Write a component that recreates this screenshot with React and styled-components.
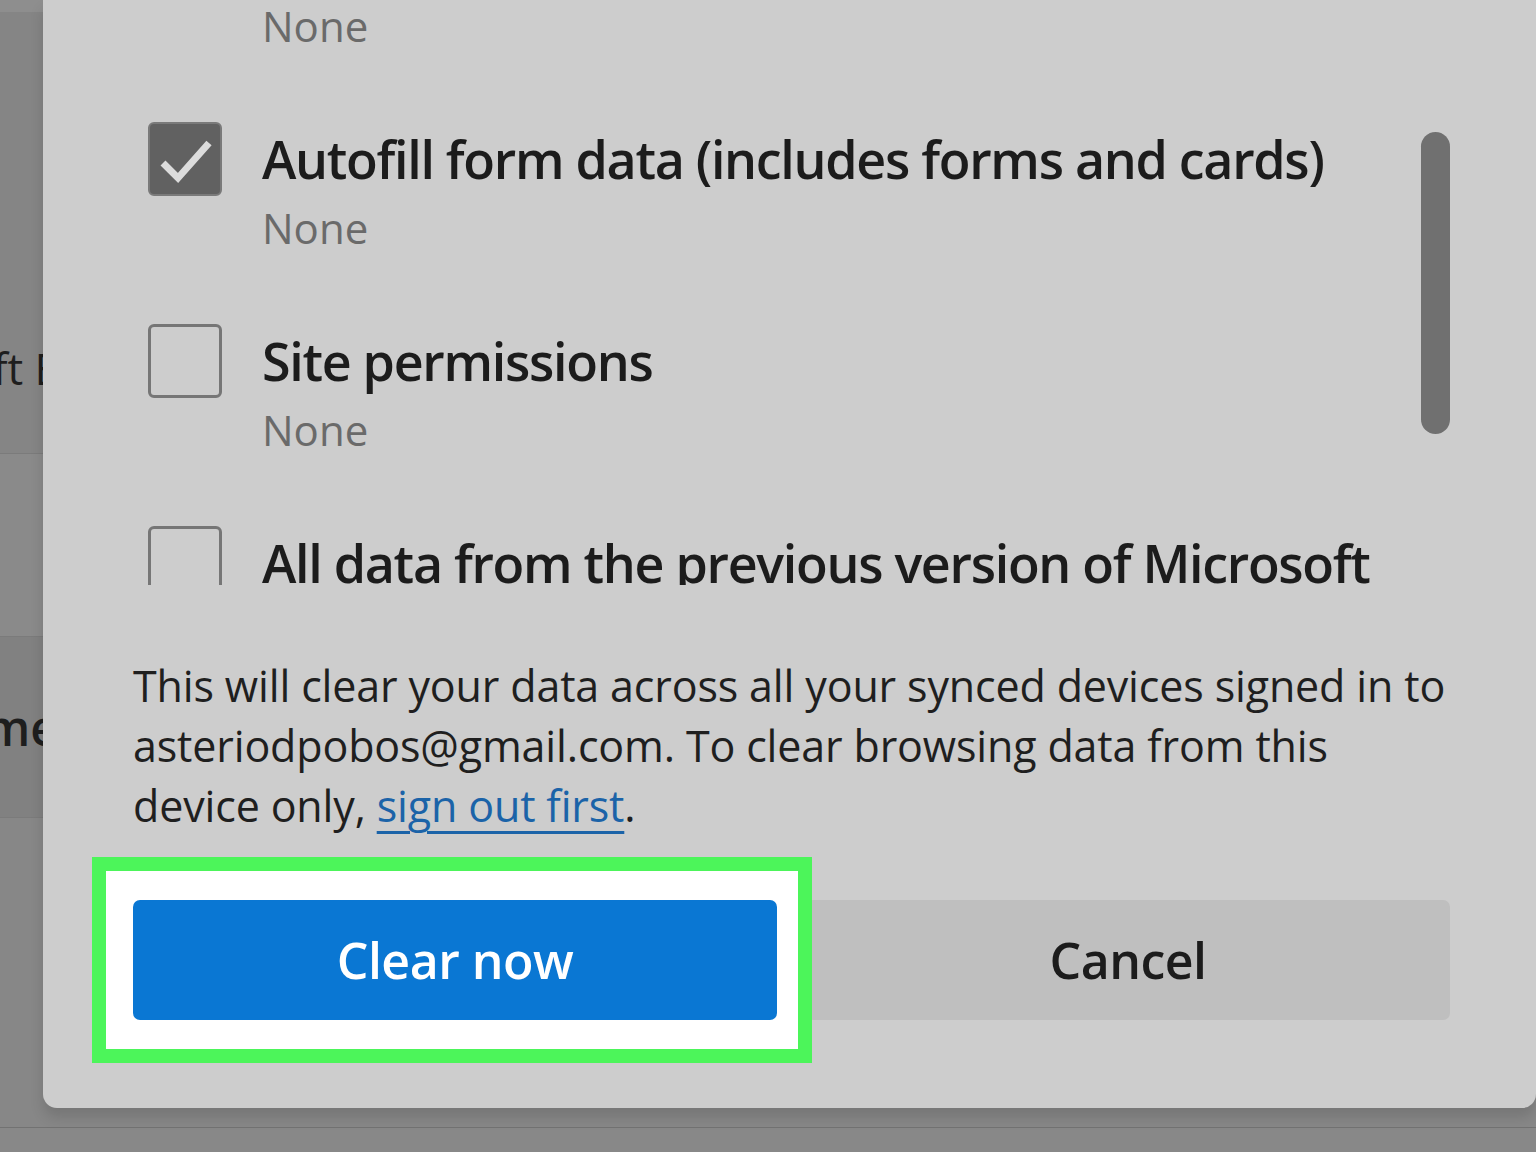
import React from "react";
import styled, { createGlobalStyle } from "styled-components";

const GlobalStyle = createGlobalStyle`
  html, body {
    margin: 0;
    padding: 0;
    background: #888888;
    overflow: hidden;
  }
  body {
    font-family: "Open Sans", "Noto Sans", "Liberation Sans", sans-serif;
  }
`;

const Page = styled.div`
  position: relative;
  width: 1536px;
  height: 1152px;
  overflow: hidden;
  background: #888888;
`;

// settings page behind the modal, only its right-hand edge is visible
const Backdrop = styled.div`
  display: flex;
  flex-direction: column;
  width: 100%;
  height: 100%;
`;

const BackdropStrip = styled.div`
  flex: 1;
  display: flex;
  flex-direction: column;
`;

const BackdropRow = styled.div`
  height: ${props => props.h}px;
  flex: ${props => (props.grow ? 1 : "none")};
  background: ${props => props.bg};
  display: flex;
  align-items: center;
  justify-content: flex-end;
  width: ${props => props.w || 60}px;
  overflow: hidden;
  border-bottom: ${props => (props.line ? "1px solid #7b7b7b" : "none")};
`;

const BackdropFooter = styled.div`
  height: 24px;
  background: #888888;
  border-top: 1px solid #727272;
`;

const BackdropText = styled.span`
  font-size: ${props => (props.bold ? 48 : 44)}px;
  font-weight: ${props => (props.bold ? 600 : 400)};
  color: #1e1e1e;
  white-space: nowrap;
`;

const Dialog = styled.div`
  position: absolute;
  left: 43px;
  right: 0;
  top: 0;
  height: 1108px;
  box-sizing: border-box;
  padding: 0 86px 88px 90px;
  background: #cdcdcd;
  border-radius: 0 0 14px 14px;
  box-shadow: 0 10px 14px rgba(0, 0, 0, 0.13);
  display: flex;
  flex-direction: column;
`;

const ScrollArea = styled.div`
  position: relative;
  height: 585px;
  overflow: hidden;
  flex: none;
`;

const List = styled.div`
  margin-top: -80px;
  padding: 0 30px 0 15px;
`;

const Item = styled.div`
  display: grid;
  grid-template-columns: 74px 1fr;
  column-gap: 40px;
  margin-bottom: 64px;
`;

const Box = styled.div`
  width: 74px;
  height: 74px;
  box-sizing: border-box;
  border-radius: 6px;
  border: ${props => (props.checked ? "2px solid #7a7a7a" : "3px solid #767676")};
  background: ${props => (props.checked ? "#616161" : "transparent")};
  display: flex;
  align-items: center;
  justify-content: center;
`;

const Title = styled.div`
  font-size: 52px;
  line-height: 74px;
  font-weight: 600;
  color: #1c1c1c;
  letter-spacing: -1.3px;
`;

const Detail = styled.div`
  grid-column: 2;
  font-size: 42px;
  line-height: 64px;
  color: #6a6a6a;
`;

const Thumb = styled.div`
  position: absolute;
  right: 0;
  top: 132px;
  width: 29px;
  height: 302px;
  border-radius: 15px;
  background: #707070;
`;

const Notice = styled.p`
  margin: 71px 0 0;
  font-size: 43px;
  line-height: 60px;
  letter-spacing: -0.15px;
  color: #1f1f1f;
`;

const Link = styled.a`
  color: #1b63a8;
  text-decoration: underline;
  text-decoration-thickness: 3px;
  text-underline-offset: 9px;
`;

const Buttons = styled.div`
  margin-top: 64px;
  display: grid;
  grid-template-columns: 1fr 1fr;
  column-gap: 29px;
  height: 120px;
`;

const Highlight = styled.div`
  position: relative;
  z-index: 1;
  display: flex;

  &::before {
    content: "";
    position: absolute;
    top: -43px;
    bottom: -43px;
    left: -41px;
    right: -35px;
    background: #ffffff;
    border: 14px solid #4cf55a;
    z-index: -1;
  }
`;

const Button = styled.button`
  flex: 1;
  width: 100%;
  height: 120px;
  border: none;
  border-radius: 7px;
  font-family: inherit;
  font-size: 50px;
  font-weight: 600;
  letter-spacing: -0.5px;
  background: ${props => (props.primary ? "#0a77d3" : "#bfbfbf")};
  color: ${props => (props.primary ? "#ffffff" : "#1c1c1c")};
  cursor: pointer;
`;

const Check = () => (
  <svg width="74" height="74" viewBox="0 0 74 74" style={{ margin: -2 }}>
    <polyline
      points="15,41 30,56 61,21"
      fill="none"
      stroke="#dcdcdc"
      strokeWidth="7"
      strokeLinejoin="miter"
    />
  </svg>
);

const items = [
  { label: "Passwords", detail: "None", checked: false },
  { label: "Autofill form data (includes forms and cards)", detail: "None", checked: true },
  { label: "Site permissions", detail: "None", checked: false },
  { label: "All data from the previous version of Microsoft Edge", detail: "None", checked: false },
  { label: "Media Foundation data", detail: "None", checked: false }
];

export default function App() {
  return (
    <Page>
      <GlobalStyle />
      <Backdrop>
        <BackdropStrip>
          <BackdropRow h={12} bg="#8e8e8e" />
          <BackdropRow h={271} bg="#858585" />
          <BackdropRow h={170} bg="#858585" w={59} line>
            <BackdropText>Microsoft E</BackdropText>
          </BackdropRow>
          <BackdropRow h={182} bg="#8a8a8a" line />
          <BackdropRow h={180} bg="#818181" w={58} line>
            <BackdropText bold>Time</BackdropText>
          </BackdropRow>
          <BackdropRow grow bg="#878787" />
        </BackdropStrip>
        <BackdropFooter />
      </Backdrop>

      <Dialog>
        <ScrollArea>
          <List>
            {items.map(item => (
              <Item key={item.label}>
                <Box checked={item.checked}>{item.checked && <Check />}</Box>
                <Title>{item.label}</Title>
                <Detail>{item.detail}</Detail>
              </Item>
            ))}
          </List>
          <Thumb />
        </ScrollArea>

        <Notice>
          This will clear your data across all your synced devices signed in to
          asteriodpobos@gmail.com. To clear browsing data from this device only,{" "}
          <Link href="#">sign out first</Link>.
        </Notice>

        <Buttons>
          <Highlight>
            <Button primary>Clear now</Button>
          </Highlight>
          <Button>Cancel</Button>
        </Buttons>
      </Dialog>
    </Page>
  );
}
